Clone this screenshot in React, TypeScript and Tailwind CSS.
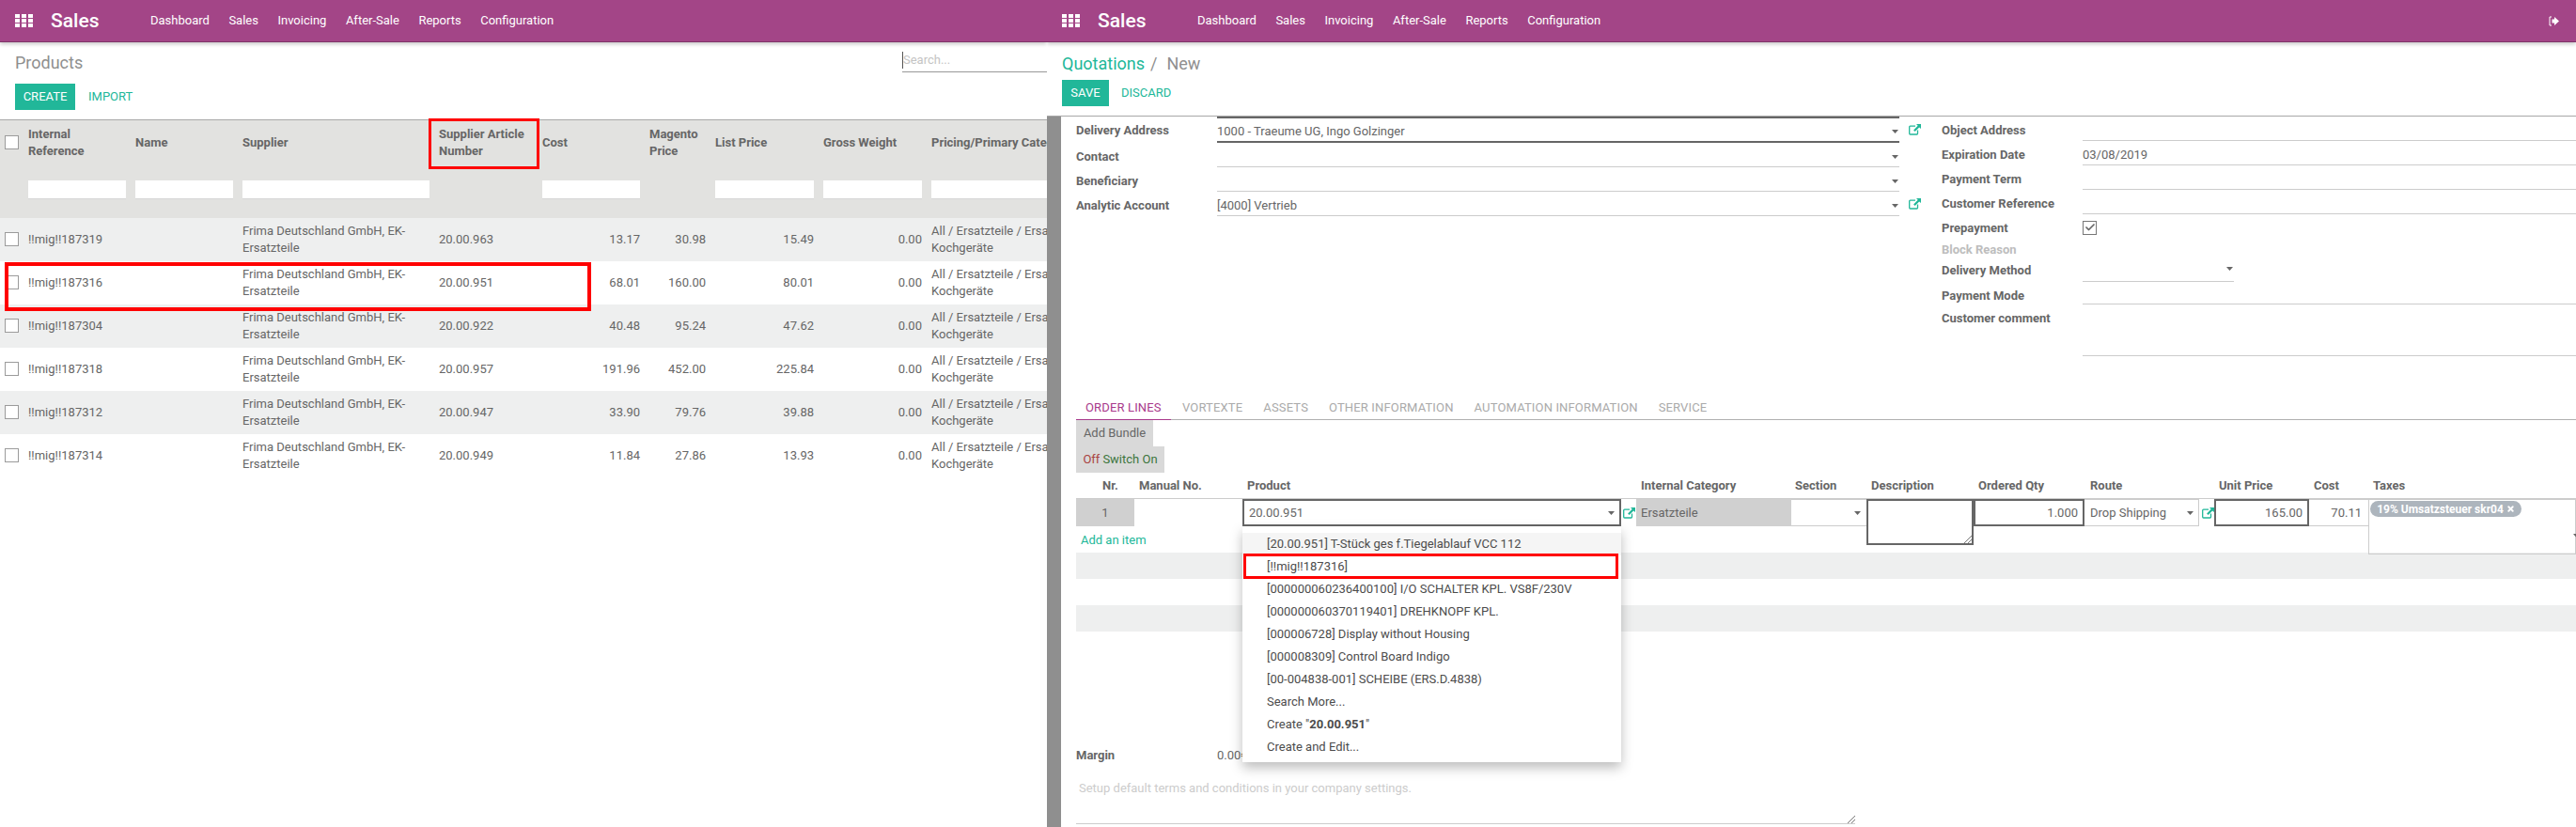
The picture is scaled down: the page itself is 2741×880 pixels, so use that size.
import { Check, X } from 'lucide-react';

const navItems = ['Dashboard', 'Sales', 'Invoicing', 'After-Sale', 'Reports', 'Configuration'];

const products = [
  { ref: '!!mig!!187319', art: '20.00.963', cost: '13.17', magento: '30.98', list: '15.49' },
  { ref: '!!mig!!187316', art: '20.00.951', cost: '68.01', magento: '160.00', list: '80.01' },
  { ref: '!!mig!!187304', art: '20.00.922', cost: '40.48', magento: '95.24', list: '47.62' },
  { ref: '!!mig!!187318', art: '20.00.957', cost: '191.96', magento: '452.00', list: '225.84' },
  { ref: '!!mig!!187312', art: '20.00.947', cost: '33.90', magento: '79.76', list: '39.88' },
  { ref: '!!mig!!187314', art: '20.00.949', cost: '11.84', magento: '27.86', list: '13.93' },
];

const menuItems = [
  '[20.00.951] T-Stück ges f.Tiegelablauf VCC 112',
  '[!!mig!!187316]',
  '[000000060236400100] I/O SCHALTER KPL. VS8F/230V',
  '[000000060370119401] DREHKNOPF KPL.',
  '[000006728] Display without Housing',
  '[000008309] Control Board Indigo',
  '[00-004838-001] SCHEIBE (ERS.D.4838)',
  'Search More...',
];

function AppsIcon() {
  return (
    <svg width="19" height="14" viewBox="0 0 19 14" fill="#fff">
      {[0, 7, 14].map((x) =>
        [0, 5, 10].map((y) => <rect key={`${x}-${y}`} x={x} y={y} width="5" height="4" />)
      )}
    </svg>
  );
}

function SignOutIcon() {
  return (
    <svg width="11" height="11" viewBox="0 0 11 11" className="ml-auto mr-[18px]">
      <path d="M3 1 H1 V10 H3" fill="none" stroke="#fff" strokeWidth="1" />
      <path d="M3.5 3.5 H6 V1 L11 5.5 L6 10 V7.5 H3.5 Z" fill="#fff" />
    </svg>
  );
}

function Caret({ className = '' }: { className?: string }) {
  return (
    <svg width="7" height="4" viewBox="0 0 7 4" className={`shrink-0 ${className}`}>
      <polygon points="0,0 7,0 3.5,4" fill="#666" />
    </svg>
  );
}

function LinkIcon({ className = '' }: { className?: string }) {
  return (
    <svg width="13" height="12" viewBox="0 0 13 12" fill="none" className={`shrink-0 ${className}`}>
      <path d="M7 2.2 H1.6 Q0.7 2.2 0.7 3.1 V10.1 Q0.7 11 1.6 11 H8.6 Q9.5 11 9.5 10.1 V6.5" stroke="#21b799" strokeWidth="1.3" />
      <path d="M8 0 H13 V5 L11.2 3.4 L6.6 7.9 L5.1 6.4 L9.7 1.8 Z" fill="#21b799" />
    </svg>
  );
}

function Navbar({ last }: { last?: boolean }) {
  return (
    <header className="relative z-10 flex h-[45px] shrink-0 items-center border-b border-[#7f3569] bg-[#a34587] pl-[16px] text-white shadow-[0_2px_4px_rgba(0,0,0,0.22)]">
      <AppsIcon />
      <span className="ml-[19px] w-[106px] text-[21px] font-medium leading-none">Sales</span>
      <nav className="flex gap-[20.5px] text-[13px]">
        {navItems.map((item) => (
          <span key={item}>{item}</span>
        ))}
      </nav>
      {last && <SignOutIcon />}
    </header>
  );
}

function Box() {
  return <span className="block h-[15px] w-[15px] border border-[#9b9b9b] bg-white" />;
}

function FilterInput() {
  return <div className="h-[20px] w-full border-b border-[#d6d6d6] bg-white" />;
}

function ProductsPanel() {
  return (
    <section className="relative h-full w-[1114px] shrink-0 overflow-hidden">
      <Navbar />
      <div className="px-[16px] pt-[10px]">
        <div className="flex h-[24px] items-start justify-between pr-0">
          <h1 className="text-[18px] font-normal leading-[24px] text-[#8f8f8f]">Products</h1>
          <div className="-mr-[16px] flex h-[22px] w-[154px] items-start border-b border-[#999] text-[13px] text-[#c4c4c4]">
            <span className="h-[18px] w-px bg-[#555]" />
            <span className="leading-[18px]">Search...</span>
          </div>
        </div>
        <div className="mt-[10px] flex h-[28px] items-center gap-[14px] text-[13px]">
          <button className="h-full w-[64px] bg-[#21b799] text-white">CREATE</button>
          <span className="text-[#21b799]">IMPORT</span>
        </div>
      </div>
      <table className="mt-[10px] w-[1300px] table-fixed border-t border-[#a8a8a8] text-[13px] leading-[18px] text-[#666]">
        <colgroup>
          {[25, 114, 114, 209, 110, 114, 70, 115, 115, 314].map((w, i) => (
            <col key={i} style={{ width: w }} />
          ))}
        </colgroup>
        <thead className="bg-[#e2e2e0] text-left font-bold">
          <tr className="h-[48px]">
            <th className="pl-[5px]"><Box /></th>
            <th className="px-[5px]">Internal<br />Reference</th>
            <th className="px-[5px]">Name</th>
            <th className="px-[5px]">Supplier</th>
            <th className="px-[5px]">Supplier Article<br />Number</th>
            <th className="px-[5px]">Cost</th>
            <th className="px-[5px]">Magento<br />Price</th>
            <th className="px-[5px]">List Price</th>
            <th className="px-[5px]">Gross Weight</th>
            <th className="whitespace-nowrap px-[5px]">Pricing/Primary Category</th>
          </tr>
          <tr className="h-[56px]">
            <th />
            <th className="px-[5px] pb-[20px] pt-[16px]"><FilterInput /></th>
            <th className="px-[5px] pb-[20px] pt-[16px]"><FilterInput /></th>
            <th className="px-[5px] pb-[20px] pt-[16px]"><FilterInput /></th>
            <th />
            <th className="px-[5px] pb-[20px] pt-[16px]"><FilterInput /></th>
            <th />
            <th className="px-[5px] pb-[20px] pt-[16px]"><FilterInput /></th>
            <th className="px-[5px] pb-[20px] pt-[16px]"><FilterInput /></th>
            <th className="px-[5px] pb-[20px] pt-[16px]"><FilterInput /></th>
          </tr>
        </thead>
        <tbody>
          {products.map((p, i) => (
            <tr key={p.ref} className={`h-[46px] ${i % 2 === 0 ? 'bg-[#eeefef]' : 'bg-white'}`}>
              <td className="pl-[5px]"><Box /></td>
              <td className="px-[5px]">{p.ref}</td>
              <td className="px-[5px]" />
              <td className="px-[5px]">Frima Deutschland GmbH, EK-<br />Ersatzteile</td>
              <td className="px-[5px]">{p.art}</td>
              <td className="px-[5px] text-right">{p.cost}</td>
              <td className="px-[5px] text-right">{p.magento}</td>
              <td className="px-[5px] text-right">{p.list}</td>
              <td className="px-[5px] text-right">0.00</td>
              <td className="whitespace-nowrap px-[5px]">All / Ersatzteile / Ersatzteile /<br />Kochgeräte</td>
            </tr>
          ))}
        </tbody>
      </table>
      {/* red annotations drawn over the list */}
      <div className="absolute left-[456px] top-[126px] h-[54px] w-[118px] border-[3px] border-[#ff0000]" />
      <div className="absolute left-[5px] top-[279px] h-[52px] w-[624px] border-4 border-[#ff0000]" />
    </section>
  );
}

function FormLabel({ children, muted, className = 'pt-[4px]' }: { children: string; muted?: boolean; className?: string }) {
  return (
    <label className={`w-[150px] shrink-0 font-bold ${className} ${muted ? 'text-[#bdbdbd]' : 'text-[#666]'}`}>
      {children}
    </label>
  );
}

function LeftField({ label, value, first, link }: { label: string; value?: string; first?: boolean; link?: boolean }) {
  return (
    <div className={`flex items-center ${first ? 'h-[28px]' : 'h-[26px]'}`}>
      <FormLabel className={first ? 'pt-[2px]' : 'pt-[4px]'}>{label}</FormLabel>
      <div
        className={`flex h-full w-[726px] items-center justify-between pr-[1px] pt-[4px] ${
          first ? 'border-y-2 border-[#666]' : 'border-b border-[#ccc]'
        }`}
      >
        <span>{value}</span>
        <Caret />
      </div>
      {link && <LinkIcon className="ml-[10px]" />}
    </div>
  );
}

function RightField({ label, value }: { label: string; value?: string }) {
  return (
    <div className="flex h-[26px] items-center">
      <FormLabel>{label}</FormLabel>
      <div className="flex h-full flex-1 items-center border-b border-[#ccc] pt-[5px]">{value}</div>
    </div>
  );
}

function QuotationForm() {
  return (
    <div className="flex h-[298px] text-[13px] leading-[18px] text-[#666]">
      <div className="w-[921px] shrink-0">
        <LeftField label="Delivery Address" value="1000 - Traeume UG, Ingo Golzinger" first link />
        <LeftField label="Contact" />
        <LeftField label="Beneficiary" />
        <LeftField label="Analytic Account" value="[4000] Vertrieb" link />
      </div>
      <div className="flex-1">
        <RightField label="Object Address" />
        <RightField label="Expiration Date" value="03/08/2019" />
        <RightField label="Payment Term" />
        <RightField label="Customer Reference" />
        <div className="flex h-[28px] items-center">
          <FormLabel className="pt-[2px]">Prepayment</FormLabel>
          <span className="flex h-[15px] w-[15px] items-center justify-center border border-[#777]">
            <Check size={12} strokeWidth={3.5} className="text-[#666]" />
          </span>
        </div>
        <div className="flex h-[20px] items-center">
          <FormLabel muted className="pt-0">Block Reason</FormLabel>
        </div>
        <div className="flex h-[24px] items-center">
          <FormLabel className="pt-0">Delivery Method</FormLabel>
          <div className="flex h-full w-[161px] items-center justify-end border-b border-[#ccc] pb-[4px] pr-[1px]">
            <Caret />
          </div>
        </div>
        <div className="flex h-[24px] items-center">
          <FormLabel className="pt-[6px]">Payment Mode</FormLabel>
          <div className="h-full flex-1 border-b border-[#ccc]" />
        </div>
        <div className="flex h-[55px] items-start">
          <FormLabel className="pt-[6px]">Customer comment</FormLabel>
          <div className="h-full flex-1 border-b border-[#ccc]" />
        </div>
      </div>
    </div>
  );
}

function Tabs() {
  const tabs = ['VORTEXTE', 'ASSETS', 'OTHER INFORMATION', 'AUTOMATION INFORMATION', 'SERVICE'];
  return (
    <div className="flex h-[25px] border-b border-[#b0b0b0] text-[13px] tracking-[0.15px]">
      <div className="-mb-px w-[101px] border-b border-[#a8398b] pl-[10px] pt-[2px] text-[#a8398b]">ORDER LINES</div>
      {tabs.map((t) => (
        <div key={t} className="pl-[12px] pr-[10px] pt-[2px] text-[#aaa]">{t}</div>
      ))}
    </div>
  );
}

function ProductMenu() {
  return (
    <div className="absolute left-[-2px] top-[27px] z-20 h-[251px] w-[403px] bg-white pt-[7px] text-[#4c4c4c] shadow-[0_6px_12px_rgba(0,0,0,0.26)]">
      {menuItems.map((item, i) => (
        <div key={item} className={`flex h-[24px] items-center pl-[26px] ${i === 0 ? 'bg-[#f5f5f5]' : ''}`}>
          {item}
        </div>
      ))}
      <div className="flex h-[24px] items-center pl-[26px]">
        Create "<b>20.00.951</b>"
      </div>
      <div className="flex h-[24px] items-center pl-[26px]">Create and Edit...</div>
      {/* red annotation */}
      <div className="absolute left-[1px] top-[29px] h-[27px] w-[399px] border-[3px] border-[#ff0000]" />
    </div>
  );
}

function OrderLines() {
  return (
    <div className="text-[13px] leading-[18px] text-[#666]">
      <div className="flex h-[28px] items-center border-b border-[#ccc] font-bold">
        <span className="w-[62px] pl-[28px]">Nr.</span>
        <span className="w-[115px] pl-[5px]">Manual No.</span>
        <span className="w-[419px] pl-[5px]">Product</span>
        <span className="w-[165px] pl-[5px]">Internal Category</span>
        <span className="w-[80px] pl-[4px]">Section</span>
        <span className="w-[114px] pl-[5px]">Description</span>
        <span className="w-[119px] pl-[5px]">Ordered Qty</span>
        <span className="w-[137px] pl-[5px]">Route</span>
        <span className="w-[101px] pl-[5px]">Unit Price</span>
        <span className="w-[63px] pl-[5px]">Cost</span>
        <span className="pl-[5px]">Taxes</span>
      </div>
      <div className="flex h-[29px] items-start">
        <div className="flex h-[29px] w-[62px] items-center justify-center bg-[#d0d0d0]">1</div>
        <div className="h-[29px] w-[115px]" />
        <div className="relative flex h-[29px] w-[403px] items-center justify-between border-2 border-[#666] px-[5px]">
          <span>20.00.951</span>
          <Caret />
          <ProductMenu />
        </div>
        <div className="flex h-[29px] w-[16px] items-center justify-center"><LinkIcon /></div>
        <div className="flex h-[29px] w-[165px] items-center bg-[#d0d0d0] pl-[5px]">Ersatzteile</div>
        <div className="flex h-[29px] w-[80px] items-center justify-end border-y border-[#ccc] pr-[6px]"><Caret /></div>
        <div className="relative h-[49px] w-[114px] border-2 border-[#666] bg-white">
          <svg width="8" height="8" viewBox="0 0 8 8" className="absolute bottom-0 right-0">
            <path d="M0 8 L8 0 M4 8 L8 4" stroke="#555" strokeWidth="0.8" />
          </svg>
        </div>
        <div className="flex h-[29px] w-[118px] items-center justify-end border-2 border-[#666] pr-[5px]">1.000</div>
        <div className="flex h-[29px] w-[122px] items-center justify-between border-y border-r border-[#ccc] pl-[6px] pr-[5px]">
          <span>Drop Shipping</span>
          <Caret />
        </div>
        <div className="flex h-[29px] w-[16px] items-center overflow-hidden pl-[3px]"><LinkIcon /></div>
        <div className="flex h-[29px] w-[101px] items-center justify-end border-2 border-[#666] bg-white pr-[5px]">165.00</div>
        <div className="flex h-[29px] w-[63px] items-center justify-end border-y border-[#ccc] pr-[7px]">70.11</div>
        <div className="relative h-[59px] w-[221px] border border-[#ccc] pl-px pt-px">
          <span className="flex h-[17px] w-[161px] items-center justify-center gap-[3px] rounded-full bg-[#adb5bd] text-[12px] font-bold text-white">
            19% Umsatzsteuer skr04 <X size={9} strokeWidth={5} />
          </span>
          <Caret className="absolute right-[-5px] top-[36px]" />
        </div>
      </div>
      <div className="flex h-[28px] items-center pl-[5px] pt-[2px] text-[#21b799]">Add an item</div>
      <div className="h-[28px] bg-[#eeefef]" />
      <div className="h-[28px]" />
      <div className="h-[28px] bg-[#eeefef]" />
      <div className="mt-[123px] flex h-[18px] items-center">
        <label className="w-[150px] font-bold">Margin</label>
        <span>0.00€</span>
      </div>
      <div className="relative mt-[17px] h-[47px] w-[829px] border-b border-[#ccc] pl-[3px] text-[#ccc]">
        Setup default terms and conditions in your company settings.
        <svg width="8" height="8" viewBox="0 0 8 8" className="absolute bottom-0 right-0">
          <path d="M0 8 L8 0 M4 8 L8 4" stroke="#555" strokeWidth="0.8" />
        </svg>
      </div>
    </div>
  );
}

function QuotationPanel() {
  return (
    <section className="flex h-full min-w-0 flex-1 flex-col overflow-hidden">
      <Navbar last />
      <div className="border-b border-[#a8a8a8] pl-[16px] pt-[11px] pb-[10px]">
        <div className="flex h-[24px] text-[18px] leading-[24px] text-[#8f8f8f]">
          <span className="text-[#21b799]">Quotations</span>
          <span className="ml-[6px]">/</span>
          <span className="ml-[10px]">New</span>
        </div>
        <div className="mt-[5px] flex h-[28px] items-center gap-[13px] text-[13px]">
          <button className="h-full w-[50px] bg-[#21b799] text-white">SAVE</button>
          <span className="text-[#21b799]">DISCARD</span>
        </div>
      </div>
      <div className="flex min-h-0 flex-1">
        <div className="w-[15px] shrink-0 bg-[#8f8f8f]" />
        <div className="min-w-0 flex-1 pl-[16px]">
          <QuotationForm />
          <Tabs />
          <div className="flex h-[28px] w-[82px] items-center justify-center bg-[#d9d9d9] text-[13px] text-[#666]">Add Bundle</div>
          <div className="flex h-[28px] w-[94px] items-center justify-center gap-[3px] bg-[#d9d9d9] text-[13px]">
            <span className="text-[#a94442]">Off</span>
            <span className="text-[#3c763d]">Switch On</span>
          </div>
          <OrderLines />
        </div>
      </div>
    </section>
  );
}

export default function App() {
  return (
    <div className="flex h-[880px] w-[2741px] overflow-hidden bg-white [font-family:Roboto,sans-serif]">
      <ProductsPanel />
      <QuotationPanel />
    </div>
  );
}
